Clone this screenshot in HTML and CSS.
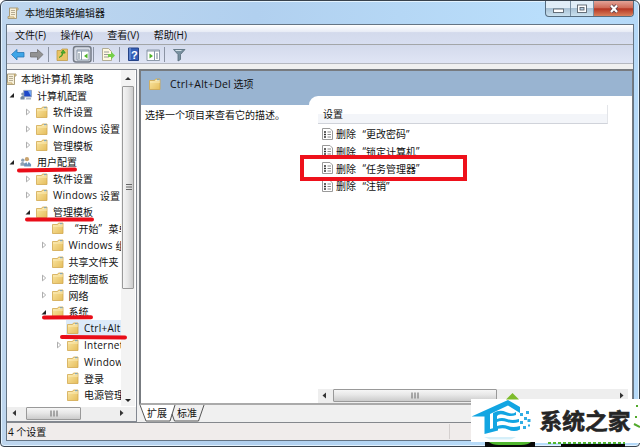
FILE: index.html
```html
<!DOCTYPE html>
<html lang="zh-CN">
<head>
    <meta charset="UTF-8">
    <title>本地组策略编辑器</title>
    <link rel="stylesheet" href="styles.css">
</head>
<body>
    <svg class="defs" width="0" height="0">
        <linearGradient id="gold" x2="1" y2="1"><stop offset="0" stop-color="#fbe7a5"/><stop offset="1" stop-color="#e5bd5b"/></linearGradient>
        <symbol id="folder" viewBox="0 0 12 12">
            <path d="M.5 2.5h5l1-1.5h4.500v10.500H.5z" fill="url(#gold)" stroke="#d2a84f" stroke-width=".8"/>
            <path d="M6.500 2.500h4M1 4h10" stroke="#fff3c4" stroke-width=".8"/>
            <path d="M8 1.700h2.500" stroke="#6fa0c8"/>
        </symbol>
        <symbol id="scroll" viewBox="0 0 12 12">
            <path d="M2.500 1h8.500v2H9.500v8.500H1V9.500h1.500z" fill="#f7f0da" stroke="#a3946e" stroke-width=".9"/>
            <path d="M4 3.500h4M4 5.500h4M4 7.500h4" stroke="#a49a80" stroke-width=".8"/>
            <path d="M1 10h6v1.500M9.500 3V1" stroke="#c5a868" fill="none"/>
        </symbol>
        <symbol id="computer" viewBox="0 0 13 12">
            <path d="M4 1h8.500v7H4z" fill="#1c47c9" stroke="#9babc0"/>
            <path d="M8.500 1.500H12v6z" fill="#6ea3f1"/>
            <path d="M7 9h5v2H6z" fill="#a9b5c4"/>
            <circle cx="3" cy="5" r="1.700" fill="#8297ad"/>
            <path d="M.5 11V8.500Q3 5.500 5 8.500V11z" fill="#71879f"/>
        </symbol>
        <symbol id="users" viewBox="0 0 13 12">
            <circle cx="3" cy="4" r="1.800" fill="#8da0b3"/>
            <path d="M.5 10V7.500Q3 4.500 5.500 8V10z" fill="#8da0b3"/>
            <circle cx="7.500" cy="3" r="2.300" fill="#c9a36e"/>
            <path d="M4.500 11V8.500Q8 3.500 12 8.500V11z" fill="#6d94bb"/>
            <path d="M7 6l1 3 1-3z" fill="#fff"/>
        </symbol>
        <symbol id="policy" viewBox="0 0 11 12">
            <path d="M.5.5h7.500l2.500 2.500v8.500H.5z" fill="#fff" stroke="#9a9a9a"/>
            <path d="M2 4h2M2 6.500h2M2 9h2" stroke="#333" stroke-width="1.400"/>
            <path d="M5.500 4H9M5.500 6.500H9M5.500 9H9" stroke="#8a8a8a"/>
        </symbol>
        <symbol id="open" viewBox="0 0 8 8"><path d="M6 2v4.500H1.500z" fill="#222"/></symbol>
        <symbol id="closed" viewBox="0 0 8 8"><path d="M2.500 1.200 5.700 4 2.500 6.800z" fill="#fff" stroke="#999" stroke-width=".8"/></symbol>
    </svg>

    <div class="window">
        <div class="titlebar">
            <svg class="title-icon"><use href="#scroll"/></svg>
            <span>本地组策略编辑器</span>
            <div class="controls">
                <div class="min"><svg width="24" height="15"><rect x="7.500" y="8" width="10" height="3.500" fill="#fff" stroke="#59636d" stroke-width=".9"/></svg></div>
                <div class="max"><svg width="22" height="15"><rect x="6.500" y="4" width="9" height="7.500" fill="#fff" stroke="#59636d" stroke-width=".9"/><rect x="9" y="6.500" width="4" height="2.500" fill="#b8cfe4" stroke="#59636d" stroke-width=".9"/></svg></div>
                <div class="close"><svg width="39" height="15"><path d="M17 4.500l6 6.500M23 4.500l-6 6.500" stroke="#59404a" stroke-width="3.800"/><path d="M17 4.500l6 6.500M23 4.500l-6 6.500" stroke="#fff" stroke-width="2.200"/></svg></div>
            </div>
        </div>

        <div class="client">
            <div class="menubar">
                <span>文件(F)</span><span>操作(A)</span><span>查看(V)</span><span>帮助(H)</span>
            </div>
            <div class="toolbar">
                <svg width="200" height="18">
                    <path d="M4.500 9.500 10 4.500v3h7v4.500h-7v3z" fill="#3da5e8" stroke="#2676b5" stroke-width=".8"/>
                    <path d="M36 9.500 30.500 4.500v3h-7v4.500h7v3z" fill="#929292" stroke="#707070" stroke-width=".8"/>
                    <path d="M41.500 2v15M86.500 2v15M112.500 2v15M157.500 2v15" stroke="#8b93a3"/>
                    <path d="M50 5.500h4l1-1.500h5.500v11.500H50z" fill="#e9c466" stroke="#bc953e" stroke-width=".7"/>
                    <path d="M52 12.500q4-1 4-5M54 8l2.200-3 2 3z" fill="#62b832" stroke="#3d9825"/>
                    <rect x="66.500" y="1.500" width="17.500" height="15.500" rx="2.500" fill="#d5dae4" stroke="#747b86" stroke-width="1.500"/>
                    <path d="M70 5h12v10H70z" fill="#fff" stroke="#8290a0" stroke-width=".9"/>
                    <path d="M70 6h12M74.500 6v9" stroke="#8797ab"/><path d="M71 9h2M71 11h2M71 13h2" stroke="#6f8090"/>
                    <path d="M80.500 8.500v5L77 11z" fill="#4db527"/>
                    <path d="M95.500 3.500h6l3 3v9h-9z" fill="#fff9df" stroke="#a29c80" stroke-width=".8"/>
                    <path d="M97 7h5M97 9.500h5M97 12h5" stroke="#999"/><path d="M101 9h3V6.500l4 4-4 4V12h-3z" fill="#75cf48"/>
                    <path d="M121.500 3h10v12.500h-10z" fill="#345fb8" stroke="#254386"/><path d="M123 3v12" stroke="#86a7e0"/>
                    <text class="help" x="124" y="13.500">?</text>
                    <path d="M140 5h12.500v10.500H140z" fill="#fff" stroke="#8290a0" stroke-width=".9"/><path d="M140 6h12.500M147.500 6v9" stroke="#8797ab"/>
                    <path d="M149 9h2M149 11h2M149 13h2" stroke="#6f8090"/><path d="M142.500 8.500v5l3.500-2.500z" fill="#4db527"/>
                    <path d="M166.500 4.500h11.500l-4.500 5v5l-2.500 1.500V9.500z" fill="#78909f" stroke="#566b78" stroke-width=".8"/><path d="M168.500 5.500h6" stroke="#d3e1e8"/>
                </svg>
            </div>

            <div class="panes">
                <div class="left-pane">
                    <div class="tree-area">
                        <div class="tree">
                            <div class="row root"><svg class="ico"><use href="#scroll"/></svg>本地计算机 策略</div>
                            <div class="row"><svg class="arrow"><use href="#open"/></svg><svg class="ico"><use href="#computer"/></svg>计算机配置</div>
                            <div class="row l2"><svg class="arrow"><use href="#closed"/></svg><svg class="ico"><use href="#folder"/></svg>软件设置</div>
                            <div class="row l2"><svg class="arrow"><use href="#closed"/></svg><svg class="ico"><use href="#folder"/></svg><i>Windows</i>&nbsp;设置</div>
                            <div class="row l2"><svg class="arrow"><use href="#closed"/></svg><svg class="ico"><use href="#folder"/></svg>管理模板</div>
                            <div class="row"><svg class="arrow"><use href="#open"/></svg><svg class="ico"><use href="#users"/></svg>用户配置</div>
                            <div class="row l2"><svg class="arrow"><use href="#closed"/></svg><svg class="ico"><use href="#folder"/></svg>软件设置</div>
                            <div class="row l2"><svg class="arrow"><use href="#closed"/></svg><svg class="ico"><use href="#folder"/></svg><i>Windows</i>&nbsp;设置</div>
                            <div class="row l2"><svg class="arrow"><use href="#open"/></svg><svg class="ico"><use href="#folder"/></svg>管理模板</div>
                            <div class="row l3"><svg class="arrow"></svg><svg class="ico"><use href="#folder"/></svg><b>“</b>开始<b class="end">”</b>菜单</div>
                            <div class="row l3"><svg class="arrow"><use href="#closed"/></svg><svg class="ico"><use href="#folder"/></svg><i>Windows</i>&nbsp;组</div>
                            <div class="row l3"><svg class="arrow"></svg><svg class="ico"><use href="#folder"/></svg>共享文件夹</div>
                            <div class="row l3"><svg class="arrow"><use href="#closed"/></svg><svg class="ico"><use href="#folder"/></svg>控制面板</div>
                            <div class="row l3"><svg class="arrow"><use href="#closed"/></svg><svg class="ico"><use href="#folder"/></svg>网络</div>
                            <div class="row l3"><svg class="arrow"><use href="#open"/></svg><svg class="ico"><use href="#folder"/></svg>系统</div>
                            <div class="row l4 selected"><svg class="arrow"></svg><svg class="ico"><use href="#folder"/></svg><i>Ctrl+Alt</i></div>
                            <div class="row l4"><svg class="arrow"><use href="#closed"/></svg><svg class="ico"><use href="#folder"/></svg><i>Internet</i></div>
                            <div class="row l4"><svg class="arrow"></svg><svg class="ico"><use href="#folder"/></svg><i>Window</i></div>
                            <div class="row l4"><svg class="arrow"></svg><svg class="ico"><use href="#folder"/></svg>登录</div>
                            <div class="row l4"><svg class="arrow"></svg><svg class="ico"><use href="#folder"/></svg>电源管理</div>
                        </div>
                        <div class="vscroll">
                            <svg width="13" height="16"><path d="M4 10h6L7 7z" fill="#333"/></svg>
                            <div class="thumb"><svg width="11" height="10"><path d="M3 1.500h6M3 4h6M3 6.500h6" stroke="#666"/></svg></div>
                            <svg width="13" height="14"><path d="M4 7h6l-3 3z" fill="#222"/></svg>
                        </div>
                    </div>
                    <div class="hscroll">
                        <svg width="19" height="13"><path d="M9 3v6L5.500 6z" fill="#333"/></svg>
                        <div class="thumb"><svg width="10" height="9"><path d="M2 1.500v6M5 1.500v6M8 1.500v6" stroke="#666"/></svg></div>
                        <svg class="next" width="25" height="13"><path d="M9 3v6l3.500-3z" fill="#333"/></svg>
                    </div>
                </div>

                <div class="right-pane">
                    <div class="content">
                        <div class="pane-head"><svg class="ico"><use href="#folder"/></svg><i>Ctrl+Alt+Del</i>&nbsp;选项</div>
                        <div class="detail">
                            <p class="hint">选择一个项目来查看它的描述。</p>
                            <div class="list">
                                <div class="list-head">设置</div>
                                <div class="item"><svg><use href="#policy"/></svg>删除<b>“</b>更改密码<b class="end">”</b></div>
                                <div class="item"><svg><use href="#policy"/></svg>删除<b>“</b>锁定计算机<b class="end">”</b></div>
                                <div class="item"><svg><use href="#policy"/></svg>删除<b>“</b>任务管理器<b class="end">”</b></div>
                                <div class="item"><svg><use href="#policy"/></svg>删除<b>“</b>注销<b class="end">”</b></div>
                                <div class="hscroll">
                                    <svg width="15" height="13"><path d="M8 3.500v6L4.500 6.500z" fill="#333"/></svg>
                                    <div class="thumb"><svg width="10" height="9"><path d="M2 1.500v6M5 1.500v6M8 1.500v6" stroke="#666"/></svg></div>
                                    <svg class="next" width="13" height="13"><path d="M5 3.500v6l3.500-3z" fill="#333"/></svg>
                                </div>
                            </div>
                        </div>
                    </div>
                    <div class="tabs">
                        <svg width="70" height="17"><path d="M0 0h35l-5 16H7z" fill="#fff"/><path d="M1 0l6 16h24l5-16M33 9l2.500 7h24L65 0" fill="none" stroke="#555"/></svg>
                        <div class="tab-names"><span>扩展</span><span>标准</span></div>
                    </div>
                </div>
            </div>
            <div class="status"><span>4 个设置</span></div>
        </div>
    </div>

    <!-- Marcas rojas -->
    <svg class="marks" viewBox="0 0 640 447">
        <path d="M19 170.500 75 169.500M27 219.500 92 219.500M44 317.500 91 317.300M62 337 125 337.500" stroke="#e90d18" stroke-width="4" stroke-linecap="round"/>
        <rect x="302" y="157" width="163" height="22" fill="none" stroke="#ee111b" stroke-width="4"/>
    </svg>

    <!-- Logotipo -->
    <svg class="logo" viewBox="0 0 169 55">
        <path d="M0 7h169v43H0z" fill="#fff"/>
        <path d="M35 7.500 41.500 1 48 7.500z" fill="#7dbb2b"/>
        <path d="M.5 24.500 37 8l12 7v6L37 13.500 19 22v15l8-2v3.500L13.500 42V24.500z" fill="#12a5e2"/>
        <path d="M22 21q7-4 13-1t10 0v3q-5 2-11 0t-8 1v3q5-2 10 0t12 0v3q-6 2-12 0t-10 0v4q6-2 11 0t12 0v3.500q-6 3-12 0t-15 1z" fill="#12a5e2"/>
        <path d="M49 21h3v3h-3zM55 19h3v3h-3zM53 25h3v3h-3zM49 29h3v3h-3zM56.500 27h3v3h-3zM52 34h3v3h-3zM57 32.500h2v2h-2z" fill="#31ade4"/>
        <path d="M13 45h32l-5 2.500H19z" fill="#d5eff9"/>
        <text class="brand" x="68.500" y="36.500" textLength="91" lengthAdjust="spacingAndGlyphs">系统之家</text>
        <path d="M14 50h50v5H14zM90 52h64v3H90z" fill="#080808"/>
        <path d="M18 50h42q-3 3-10 3H28q-7 0-10-3z" fill="#51b72f"/>
        <path d="M64 50h105v1H64z" fill="#fff"/>
        <path d="M77 51h77" stroke="#51b72f" stroke-width="2" stroke-dasharray="3 2"/>
        <path d="M163 32l6 3M166 13v2M165 24v2" stroke="#51a92b" stroke-width="2"/>
    </svg>
</body>
</html>
```
FILE: styles.css
```css
* {
    margin: 0;
    padding: 0;
    box-sizing: border-box;
}

body {
    position: relative;
    width: 640px;
    height: 447px;
    overflow: hidden;
    background: #fff;
    font: 10px "Open Sans", "Noto Sans CJK SC", sans-serif;
    color: #111;
    white-space: nowrap;
}

svg {
    display: block;
    flex: none;
}

i,
b {
    font-style: normal;
    font-weight: normal;
}

/* Comillas chinas de ancho completo */
b {
    flex: none;
    width: 10px;
    text-align: right;
}

b.end {
    text-align: left;
}

.defs {
    position: absolute;
}

/* Ventana */
.window {
    display: flex;
    flex-direction: column;
    height: 447px;
    padding: 0 5px 5px;
    border: 1px solid #38424d;
    border-radius: 6px 6px 4px 4px;
    background: linear-gradient(90deg, #bed6ee, #b1d0ef 40%, #b9defb 85%, #b5d9f8);
    box-shadow: inset 0 0 0 1px #e3f3ff;
}

.titlebar {
    display: flex;
    align-items: center;
    height: 23px;
}

.title-icon {
    width: 12px;
    height: 12px;
    margin: 1px 6px 0 1px;
}

.controls {
    display: flex;
    align-self: flex-start;
    height: 16px;
    margin-left: auto;
    border: 1px solid #566d80;
    border-top: 0;
    border-radius: 0 0 4px 4px;
    overflow: hidden;
    background: linear-gradient(#e0edf7 45%, #a8c1d4 50%, #cae1ef);
}

.min,
.max {
    border-right: 1px solid #788fa3;
}

.close {
    background: linear-gradient(#e3a397, #cf6b58 45%, #b53623 52%, #d9805b);
}

.client {
    flex: 1;
    display: flex;
    flex-direction: column;
    border: 1px solid #657585;
    background: #f0f0f0;
}

.menubar {
    display: flex;
    align-items: center;
    gap: 14.500px;
    height: 20px;
    padding-left: 8px;
    border-bottom: 1px solid #a3a6a8;
    background: linear-gradient(#fff, #e8ecf6 35%, #d3daec 40%, #d7def0);
}

.toolbar {
    height: 19px;
    border-bottom: 1px solid #b5b8c0;
    background: linear-gradient(#d3daec, #e0e5f5);
}

.help {
    font: bold 11px "Liberation Sans", sans-serif;
    fill: #fff;
}

/* Paneles */
.panes {
    display: flex;
    flex: none;
    gap: 2px;
    height: 358px;
    padding-top: 5px;
}

.left-pane {
    display: flex;
    flex-direction: column;
    width: 130px;
    border: 1px solid #828790;
    border-left: 0;
    background: #fff;
}

.tree-area {
    flex: 1;
    display: flex;
    min-height: 0;
}

.tree {
    width: 114px;
    overflow: hidden;
}

.row {
    display: flex;
    align-items: center;
    height: 16.65px;
    padding-left: 1px;
}

.row.root {
    height: 17px;
    padding-left: 0;
}

.row.root .ico {
    margin: 0 4px 0 -2px;
}

.row.l2 { padding-left: 17px; }
.row.l3 { padding-left: 32.500px; }
.row.l4 { padding-left: 48px; }

.row.selected {
    background: linear-gradient(90deg, transparent 59px, #dceaf9 59px);
}

.arrow {
    width: 8px;
    height: 8px;
    margin-right: 4px;
}

.ico {
    width: 12px;
    height: 12px;
    margin-right: 5px;
}

.row i {
    letter-spacing: .25px;
}

.vscroll {
    display: flex;
    flex-direction: column;
    justify-content: space-between;
    width: 14px;
    height: 336px;
    background: #f3f3f3;
}

.vscroll .thumb {
    display: flex;
    align-items: center;
    width: 12px;
    height: 203px;
    margin: 0 0 auto 1px;
    border: 1px solid #999;
    border-radius: 1px;
    background: linear-gradient(90deg, #f4f4f4, #e6e6e6 50%, #cbcbcb);
}

.hscroll {
    display: flex;
    height: 14px;
    background: #eee;
}

.hscroll .thumb {
    display: flex;
    align-items: center;
    justify-content: center;
    width: 55px;
    height: 13px;
    border: 1px solid #999;
    border-radius: 1px;
    background: linear-gradient(#f6f6f6, #e7e7e7 45%, #cbcbcb);
}

.hscroll .next {
    margin-left: auto;
}

.right-pane {
    flex: 1;
    display: flex;
    flex-direction: column;
}

.content {
    display: flex;
    flex: none;
    flex-direction: column;
    height: 336px;
    border: 1px solid #777b80;
    border-width: 2px 1px 2px 2px;
    border-bottom-color: #aaa;
    background: #99b4d1;
}

.pane-head {
    display: flex;
    align-items: center;
    height: 25px;
    padding-left: 8px;
}

.pane-head .ico {
    margin-right: 9px;
}

.pane-head i {
    font-size: 10.500px;
    letter-spacing: .2px;
}

.detail {
    flex: 1;
    display: flex;
    background: linear-gradient(#99b4d1 9px, #fff 9px);
}

.hint {
    width: 168px;
    padding: 12px 0 0 4px;
    line-height: 15px;
}

.list {
    flex: 1;
    display: flex;
    flex-direction: column;
    padding: 9px 4px 0 9px;
    border-radius: 9px 0 0 0;
    background: #fff;
}

.list-head {
    width: 290px;
    height: 19px;
    margin-bottom: 1px;
    padding-left: 5px;
    border-right: 1px solid #e3e5e9;
    border-bottom: 1px solid #d0d3da;
    background: linear-gradient(#fff 50%, #f3f5f9 50%);
    line-height: 19px;
}

.item {
    display: flex;
    align-items: center;
    height: 17.400px;
    padding-left: 4px;
}

.item svg {
    width: 11px;
    height: 12px;
    margin-right: 3px;
}

.list .hscroll {
    margin-top: auto;
}

.list .hscroll .thumb {
    width: 164px;
}

/* Pestañas inferiores */
.tabs {
    position: relative;
    height: 17px;
}

.tab-names {
    position: absolute;
    top: 1px;
    left: 8px;
    display: flex;
    gap: 10px;
    line-height: 15px;
}

.status {
    flex: 1;
    display: flex;
    align-items: center;
    border-top: 1px solid #85888d;
    background: #f0eceb;
}

.status span {
    width: 443px;
    padding-left: 1px;
    border-right: 1px solid #d5d0cf;
}

.marks {
    position: absolute;
    top: 0;
    left: 0;
    width: 640px;
    height: 447px;
}

/* Logotipo sobre la ventana */
.logo {
    position: absolute;
    top: 392px;
    left: 471px;
    width: 169px;
    height: 55px;
}

.brand {
    font: bold 22px "Noto Sans CJK SC", sans-serif;
    fill: #252525;
    stroke: #252525;
    stroke-width: .6px;
}
```
